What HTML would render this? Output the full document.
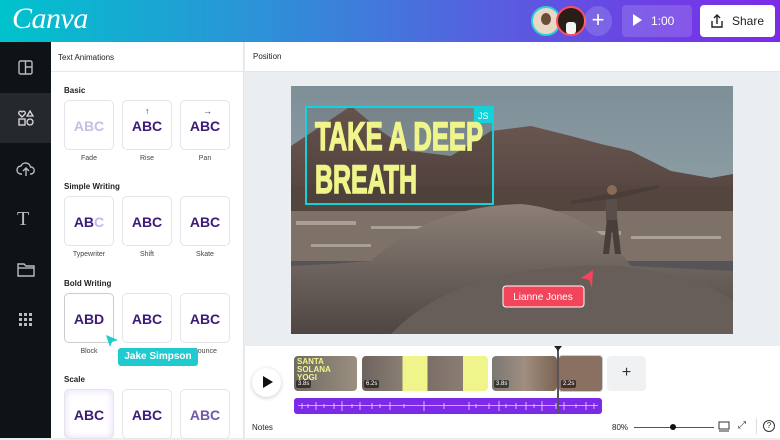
<!DOCTYPE html>
<html><head><meta charset="utf-8"><style>
*{margin:0;padding:0;box-sizing:border-box}
body{width:780px;height:438px;overflow:hidden;font-family:"Liberation Sans",sans-serif;background:#ebeef1;position:relative}
.a{position:absolute}
.hdr{left:0;top:0;width:780px;height:42px;background:linear-gradient(90deg,#00c3cc 0%,#2f8fd8 35%,#5a5be0 65%,#7d2ae8 100%)}
.side{left:0;top:42px;width:51px;height:396px;background:#0e1318}
.panel{left:51px;top:42px;width:193px;height:396px;background:#fff;border-right:1px solid #e3e5e8}
.card{position:absolute;width:50px;height:50px;border:1px solid #e3e5e8;border-radius:5px;background:#fff;font-weight:bold;font-size:14px;color:#3c1a78;text-align:center;line-height:50px}
.lbl{position:absolute;width:58px;text-align:center;font-size:7px;color:#444}
.sec{position:absolute;left:64px;font-size:8px;color:#222;font-weight:bold}
</style></head><body>
<div class="a hdr"></div>
<div class="a" style="left:12px;top:2px;font-family:'Liberation Serif',serif;font-style:italic;font-size:30px;color:#fff;letter-spacing:-0.5px">Canva</div>
<div class="a" style="left:531px;top:6px;width:30px;height:30px;border-radius:50%;background:#e9d8c5;border:2px solid #27d3d6"><div class="a" style="left:8px;top:5px;width:10px;height:12px;background:#6b4e3a;border-radius:50%"></div></div>
<div class="a" style="left:556px;top:6px;width:30px;height:30px;border-radius:50%;background:#2a1c16;border:2px solid #ff4d5f"><div class="a" style="left:8px;top:14px;width:10px;height:12px;background:#f3f3f3;border-radius:3px"></div></div>
<div class="a" style="left:584px;top:6px;width:28px;height:30px;border-radius:50%;background:rgba(255,255,255,.15);color:#fff;font-size:22px;text-align:center;line-height:28px">+</div>
<div class="a" style="left:622px;top:5px;width:70px;height:32px;border-radius:4px;background:rgba(255,255,255,.15);color:#fff;font-size:12px;line-height:32px"><span style="display:inline-block;margin-left:11px;width:0;height:0;border-left:9px solid #fff;border-top:6px solid transparent;border-bottom:6px solid transparent;vertical-align:-1px"></span><span style="margin-left:9px">1:00</span></div>
<div class="a" style="left:700px;top:5px;width:75px;height:32px;border-radius:4px;background:#fff;color:#222;font-size:12px;line-height:32px;padding-left:32px">Share
<svg class="a" style="left:9px;top:8px" width="16" height="16" viewBox="0 0 16 16" fill="none" stroke="#222" stroke-width="1.4"><path d="M8 11V2M5 5l3-3 3 3M3 8v6h10V8"/></svg></div>

<div class="a side"></div>
<div class="a" style="left:0;top:93px;width:51px;height:50px;background:#25282d"></div>
<svg class="a" style="left:17px;top:59px" width="18" height="18" fill="none" stroke="#bbb" stroke-width="1.4"><rect x="2" y="2" width="13" height="13" rx="1.5"/><path d="M8.5 2v13M8.5 8h6.5"/></svg>
<svg class="a" style="left:17px;top:109px" width="18" height="18" fill="none" stroke="#ddd" stroke-width="1.3"><path d="M5 8L2 5a1.7 1.7 0 013-2 1.7 1.7 0 013 2z"/><path d="M13 2l3 5h-6z"/><rect x="2" y="10" width="6" height="6"/><circle cx="13" cy="13" r="3"/></svg>
<svg class="a" style="left:16px;top:160px" width="20" height="18" fill="none" stroke="#bbb" stroke-width="1.4"><path d="M6 14H5a4 4 0 010-8 5 5 0 019.5 1A3.5 3.5 0 0115 14h-1M10 16V9M7 11l3-3 3 3"/></svg>
<div class="a" style="left:17px;top:208px;font-family:'Liberation Serif',serif;font-size:20px;color:#bbb">T</div>
<svg class="a" style="left:17px;top:261px" width="18" height="16" fill="none" stroke="#bbb" stroke-width="1.4"><path d="M1 3h6l2 2h8v10H1z"/><path d="M1 7h16"/></svg>
<svg class="a" style="left:19px;top:313px" width="14" height="14" fill="#bbb"><rect x="0" y="0" width="3" height="3"/><rect x="5" y="0" width="3" height="3"/><rect x="10" y="0" width="3" height="3"/><rect x="0" y="5" width="3" height="3"/><rect x="5" y="5" width="3" height="3"/><rect x="10" y="5" width="3" height="3"/><rect x="0" y="10" width="3" height="3"/><rect x="5" y="10" width="3" height="3"/><rect x="10" y="10" width="3" height="3"/></svg>

<div class="a panel">
<div class="a" style="left:0;top:0;width:193px;height:30px;border-bottom:1px solid #e6e8ea"></div>
<div class="a" style="left:7px;top:11px;font-size:8px;color:#222">Text Animations</div>
</div>
<div class="sec" style="top:86px">Basic</div>
<div class="sec" style="top:182px">Simple Writing</div>
<div class="sec" style="top:279px">Bold Writing</div>
<div class="sec" style="top:375px">Scale</div>

<div class="card" style="left:64px;top:100px;color:#c8bde0">ABC</div>
<div class="card" style="left:122px;top:100px">ABC<span class="a" style="left:22px;top:-15px;font-size:9px">↑</span></div>
<div class="card" style="left:180px;top:100px">ABC<span class="a" style="left:22px;top:-15px;font-size:9px">→</span></div>
<div class="lbl" style="left:60px;top:155px">Fade</div><div class="lbl" style="left:118px;top:155px">Rise</div><div class="lbl" style="left:176px;top:155px">Pan</div>

<div class="card" style="left:64px;top:196px">AB<span style="color:#c8b6ea">C</span></div>
<div class="card" style="left:122px;top:196px">ABC</div>
<div class="card" style="left:180px;top:196px">ABC</div>
<div class="lbl" style="left:60px;top:251px">Typewriter</div><div class="lbl" style="left:118px;top:251px">Shift</div><div class="lbl" style="left:176px;top:251px">Skate</div>

<div class="card" style="left:64px;top:293px;border-color:#ccc">ABD</div>
<div class="card" style="left:122px;top:293px">ABC</div>
<div class="card" style="left:180px;top:293px">ABC</div>
<div class="lbl" style="left:60px;top:348px">Block</div><div class="lbl" style="left:176px;top:348px">Bounce</div>

<div class="card" style="left:64px;top:389px;box-shadow:inset 0 0 8px #e6d8fb">ABC</div>
<div class="card" style="left:122px;top:389px">ABC</div>
<div class="card" style="left:180px;top:389px;color:#6f5aa8">ABC</div>

<svg class="a" style="left:105px;top:334px" width="14" height="14"><path d="M1 1L13 6 7 8 5 13z" fill="#1fcbd0"/></svg>
<div class="a" style="left:118px;top:348px;width:80px;height:18px;background:#1fcbd0;border-radius:3px;color:#fff;font-size:10px;font-weight:bold;text-align:center;line-height:18px">Jake Simpson</div>

<div class="a" style="left:245px;top:42px;width:535px;height:30px;background:#fff;border-bottom:1px solid #e3e5e8"></div>
<div class="a" style="left:253px;top:52px;font-size:8px;color:#222">Position</div>

<svg class="a" style="left:291px;top:86px" width="442" height="248" viewBox="0 0 442 248">
<defs><linearGradient id="s" x1="0" y1="0" x2="0" y2="1"><stop offset="0" stop-color="#7f8f98"/><stop offset="1" stop-color="#9fb0b4"/></linearGradient>
<linearGradient id="m" x1="0" y1="0" x2="0" y2="1"><stop offset="0" stop-color="#6e5a54"/><stop offset="1" stop-color="#4d3e3a"/></linearGradient>
<linearGradient id="r" x1="0" y1="0" x2="0" y2="1"><stop offset="0" stop-color="#8c7f77"/><stop offset="1" stop-color="#4e4643"/></linearGradient></defs>
<rect width="442" height="248" fill="url(#s)"/>
<path d="M0 60 L30 40 L60 20 L90 45 L120 65 L160 70 L200 45 L240 40 L280 50 L310 58 L340 65 L380 85 L420 92 L442 88 L442 140 L0 140Z" fill="url(#m)"/>
<rect y="100" width="442" height="30" fill="#54453f"/>
<rect y="125" width="442" height="50" fill="#7d7168"/>
<g fill="#cfc6b8" opacity=".55"><rect x="5" y="135" width="60" height="4"/><rect x="80" y="140" width="90" height="3"/><rect x="130" y="150" width="70" height="3"/><rect x="250" y="145" width="80" height="4"/><rect x="340" y="150" width="90" height="3"/><rect x="20" y="158" width="60" height="3"/></g>
<rect y="175" width="442" height="73" fill="#565458"/>
<path d="M0 180 L40 178 L80 175 Q140 120 230 118 Q300 125 340 180 L442 185 L442 248 L0 248Z" fill="url(#r)"/>
<path d="M100 248 Q170 175 330 180 Q410 190 442 215 L442 248Z" fill="#685e59"/>
<g fill="#4a3e3a"><path d="M316 132 L326 132 L330 168 L324 168 L321 145 L318 168 L312 168Z"/><rect x="315" y="110" width="11" height="24" fill="#5a4e48"/><path d="M318 108 L280 115 L280 118 L320 113 L324 113 L368 102 L368 99Z"/><circle cx="321" cy="104" r="5" fill="#8a6a58"/></g>
<rect x="15" y="21" width="187" height="97" fill="rgba(40,30,25,.12)" stroke="#15d1d8" stroke-width="2"/>
<rect x="183" y="20" width="20" height="17" fill="#15d1d8"/>
<text x="187" y="33" font-size="9" fill="#fff" font-family="Liberation Sans">JS</text>
<text x="24" y="64" font-family="Liberation Sans" font-weight="bold" font-size="40" fill="#eff58a" stroke="#eff58a" stroke-width="1.5" textLength="168" lengthAdjust="spacingAndGlyphs">TAKE A DEEP</text>
<text x="24" y="107" font-family="Liberation Sans" font-weight="bold" font-size="40" fill="#eff58a" stroke="#eff58a" stroke-width="1.5" textLength="102" lengthAdjust="spacingAndGlyphs">BREATH</text>
<path d="M302 184 L290 192 L298 194 L301 202Z" fill="#f2455c"/>
<rect x="212" y="200" width="81" height="21" rx="3" fill="#f2455c" stroke="#fff" stroke-width="1"/>
<text x="252" y="214" text-anchor="middle" font-size="10" fill="#fff" font-family="Liberation Sans">Lianne Jones</text>
</svg>

<div class="a" style="left:245px;top:346px;width:535px;height:92px;background:#fff"></div>
<div class="a" style="left:252px;top:368px;width:29px;height:29px;border-radius:50%;background:#fff;box-shadow:0 1px 4px rgba(0,0,0,.2)"><span class="a" style="left:11px;top:8px;border-left:10px solid #111;border-top:6.5px solid transparent;border-bottom:6.5px solid transparent"></span></div>
<div class="a" style="left:294px;top:356px;width:63px;height:35px;border-radius:4px;background:linear-gradient(90deg,#6f6a60,#9a8f80)"><span class="a" style="left:3px;top:2px;font-size:8px;font-weight:bold;color:#eff58a;line-height:8px">SANTA<br>SOLANA<br>YOGI</span></div>
<div class="a" style="left:362px;top:356px;width:126px;height:35px;border-radius:4px;background:linear-gradient(90deg,#6e645e 0,#8a7e74 32%,#eff58a 32%,#eff58a 52%,#7a6e66 52%,#8a7e74 80%,#eff58a 80%)"></div>
<div class="a" style="left:492px;top:356px;width:65px;height:35px;border-radius:4px;background:linear-gradient(90deg,#7a7872,#a08e80 50%,#7b6453)"></div>
<div class="a" style="left:558px;top:355px;width:45px;height:37px;border-radius:4px;background:#8a7060;border:1.5px solid #ccc"></div>
<div class="a" style="left:296px;top:380px;font-size:6px;color:#fff;background:rgba(0,0,0,.55);padding:1px 2px;border-radius:2px">3.8s</div>
<div class="a" style="left:364px;top:380px;font-size:6px;color:#fff;background:rgba(0,0,0,.55);padding:1px 2px;border-radius:2px">6.2s</div>
<div class="a" style="left:494px;top:380px;font-size:6px;color:#fff;background:rgba(0,0,0,.55);padding:1px 2px;border-radius:2px">3.8s</div>
<div class="a" style="left:561px;top:380px;font-size:6px;color:#fff;background:rgba(0,0,0,.55);padding:1px 2px;border-radius:2px">2.2s</div>
<div class="a" style="left:607px;top:356px;width:39px;height:35px;border-radius:4px;background:#f0f1f3;text-align:center;line-height:34px;font-size:16px;color:#333">+</div>
<div class="a" style="left:294px;top:398px;width:308px;height:16px;border-radius:3px;background:#7d2ae8"></div>
<div class="a" style="left:298px;top:405px;width:300px;height:1px;background:rgba(255,255,255,.6)"></div>
<svg class="a" style="left:294px;top:398px" width="308" height="16" stroke="#e8dcff" stroke-width="0.8"><path d="M8 5v6M14 6v4M22 4v8M30 6v4M40 5v6M48 3v10M58 6v4M66 4v8M78 5v6M86 6v4M96 4v8M110 6v4M130 3v10M150 5v6M175 4v8M182 6v4M195 5v6M205 3v10M212 6v4M222 5v6M232 4v8M240 6v4M248 3v10M262 5v6M270 4v8M282 6v4M292 4v8M300 5v6"/></svg>
<div class="a" style="left:557px;top:350px;width:1.5px;height:64px;background:#555"></div>
<div class="a" style="left:554px;top:346px;border-top:5px solid #222;border-left:4px solid transparent;border-right:4px solid transparent"></div>
<div class="a" style="left:252px;top:423px;font-size:8px;color:#222">Notes</div>
<div class="a" style="left:612px;top:423px;font-size:8px;color:#222">80%</div>
<div class="a" style="left:634px;top:427px;width:80px;height:1px;background:#555"></div>
<div class="a" style="left:670px;top:424px;width:6px;height:6px;border-radius:50%;background:#111"></div>
<svg class="a" style="left:718px;top:421px" width="12" height="12" fill="none" stroke="#333"><rect x="1" y="1" width="10" height="7"/><path d="M1 10h10"/></svg>
<div class="a" style="left:738px;top:420px;font-size:10px;color:#333">⤢</div>
<div class="a" style="left:756px;top:418px;width:1px;height:16px;background:#ddd"></div>
<div class="a" style="left:763px;top:420px;width:12px;height:12px;border:1px solid #333;border-radius:50%;font-size:8px;text-align:center;line-height:10px;color:#333">?</div>
</body></html>
